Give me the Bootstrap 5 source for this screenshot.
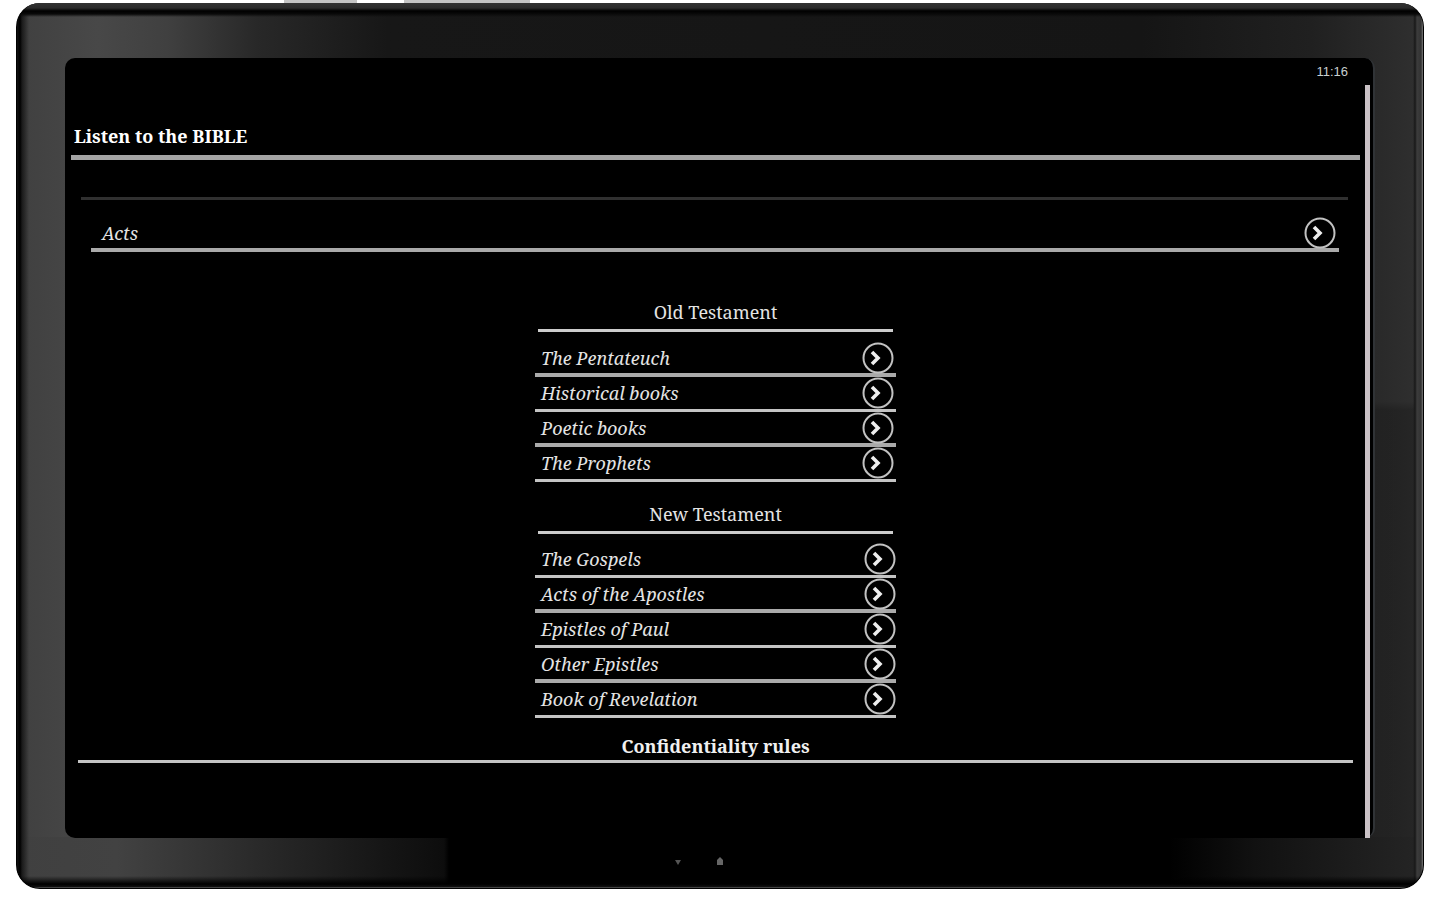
<!DOCTYPE html>
<html lang="en">
<head>
<meta charset="utf-8">
<meta name="viewport" content="width=device-width, initial-scale=1">
<title>Listen to the BIBLE</title>
<link href="https://cdn.jsdelivr.net/npm/bootstrap@5.3.0/dist/css/bootstrap.min.css" rel="stylesheet">
<style>
body{background:#fff;color:#e4e4e4;font:18px/28px "Noto Serif","Droid Serif","Liberation Serif",serif}
a,a:hover{color:inherit;text-decoration:none}
.stage{min-height:100vh;padding:0 16px 11px}
.side-buttons{height:3px;padding-left:268px;gap:47px}
.side-buttons span{background:#c4c4c4;width:73px}
.side-buttons span+span{width:126px}
.tablet{border-radius:24px;padding:55px 48px 50px 48px;border:solid #000;border-width:0 1px 1px;
 background:
 linear-gradient(#333 0,#2a2a2a 5px,#000 8px,#0a0a0a 11px,transparent 14px) top/100% 14px no-repeat,
 linear-gradient(transparent 0,#000 8px,#111 11px,#777 12px) bottom/100% 12px no-repeat,
 linear-gradient(90deg,#111 0,#000 3px,#1a1a1a 5px,transparent 12px) left/12px 100% no-repeat,
 linear-gradient(90deg,transparent,#181818 2px,#3c3c3c 4px,#333 8px,#777 10px) right/10px 100% no-repeat,
 linear-gradient(90deg,#404040 0,#424242 100px,#282828 250px,#151515 370px,#0d0d0d 427px,#000 432px,#000 82%,#111 88%,#252525 100%) bottom/100% 51px no-repeat,
 linear-gradient(transparent 45%,#0003 46%) right/60px 100% no-repeat,
 linear-gradient(90deg,#404040 0,#484848 80px,#404040 150px,#282828 240px,#171717 370px,#151515 80%,#202020 92%,#303030 100%)}
.screen{background:#000;border-radius:10px;border-right:2px solid #303336}
.status{height:27px;padding:0 25px;font:13px/27px "Liberation Sans",sans-serif;color:#c8d0d0}
.page-area{border-right:5px solid #c9c1c5;margin-right:3px;padding:35px 5px 0 6px}
.title-bar{font-size:18px;line-height:32px;font-weight:700;border-bottom:5px solid #a4a4a4;padding:0 3px;margin:0;height:40px;color:#fff}
.divider{height:3px;background:#303030;margin:37px 12px 17px 10px}
.book{height:35px;border-bottom:3px solid #c4c4c4;font-style:italic;padding:0 2px 0 6px}
.book svg{width:32px;height:32px;flex:none;overflow:visible}
.book.heavy{border-bottom:4px solid #aaa}
.current{margin:0 21px 0 20px;padding:0 3px 0 11px}
.books{width:361px;max-width:100%}
.old{margin-top:46px}
.new{margin-top:18px}
.books h2{font-size:18px;line-height:28px;font-weight:400;border-bottom:3px solid #ccc;margin:0 3px 10px;height:34px;text-align:center}
.new h2{margin-bottom:9px}
.new .book{padding-right:0}
.rules{margin:14px 7px 0;border-bottom:3px solid #c4c4c4;font-weight:700;line-height:28px;height:31px;color:#f0f0f0}
.sensors{position:absolute;left:0;right:42px;bottom:20px}
</style>
</head>
<body>
<div class="stage d-flex flex-column">
 <div class="side-buttons d-flex"><span></span><span></span></div>
 <div class="tablet position-relative flex-grow-1 d-flex flex-column">
  <div class="screen flex-grow-1 d-flex flex-column">
   <div class="status text-end">11:16</div>
   <main class="page-area flex-grow-1">
    <h1 class="title-bar">Listen to the BIBLE</h1>
    <div class="divider"></div>
    <a href="#" class="book heavy current d-flex align-items-center justify-content-between"><span>Acts</span><svg viewBox="0 0 32 32"><use href="#go"/></svg></a>
    <section class="books old mx-auto">
     <h2>Old Testament</h2>
     <a href="#" class="book heavy d-flex align-items-center justify-content-between"><span>The Pentateuch</span><svg viewBox="0 0 32 32"><use href="#go"/></svg></a>
     <a href="#" class="book d-flex align-items-center justify-content-between"><span>Historical books</span><svg viewBox="0 0 32 32"><use href="#go"/></svg></a>
     <a href="#" class="book heavy d-flex align-items-center justify-content-between"><span>Poetic books</span><svg viewBox="0 0 32 32"><use href="#go"/></svg></a>
     <a href="#" class="book d-flex align-items-center justify-content-between"><span>The Prophets</span><svg viewBox="0 0 32 32"><use href="#go"/></svg></a>
    </section>
    <section class="books new mx-auto">
     <h2>New Testament</h2>
     <a href="#" class="book d-flex align-items-center justify-content-between"><span>The Gospels</span><svg viewBox="0 0 32 32"><use href="#go"/></svg></a>
     <a href="#" class="book heavy d-flex align-items-center justify-content-between"><span>Acts of the Apostles</span><svg viewBox="0 0 32 32"><use href="#go"/></svg></a>
     <a href="#" class="book d-flex align-items-center justify-content-between"><span>Epistles of Paul</span><svg viewBox="0 0 32 32"><use href="#go"/></svg></a>
     <a href="#" class="book heavy d-flex align-items-center justify-content-between"><span>Other Epistles</span><svg viewBox="0 0 32 32"><use href="#go"/></svg></a>
     <a href="#" class="book d-flex align-items-center justify-content-between"><span>Book of Revelation</span><svg viewBox="0 0 32 32"><use href="#go"/></svg></a>
    </section>
    <a href="#" class="rules d-block text-center">Confidentiality rules</a>
   </main>
  </div>
  <div class="sensors d-flex justify-content-center">
   <svg width="60" height="14" viewBox="0 0 60 14"><path d="M6 6h6l-3 5z" fill="#555"/><path d="M48 11V6l3-3 3 3v5z" fill="#666"/></svg>
  </div>
 </div>
</div>
<svg class="d-none"><symbol id="go" viewBox="0 0 32 32"><circle cx="16" cy="16" r="14.5" fill="none" stroke="#c2c2c2" stroke-width="2"/><path d="M10 10l6 6-6 6" fill="none" stroke="#eee" stroke-width="3.6"/></symbol></svg>
<script src="https://cdn.jsdelivr.net/npm/bootstrap@5.3.0/dist/js/bootstrap.bundle.min.js"></script>
</body>
</html>
